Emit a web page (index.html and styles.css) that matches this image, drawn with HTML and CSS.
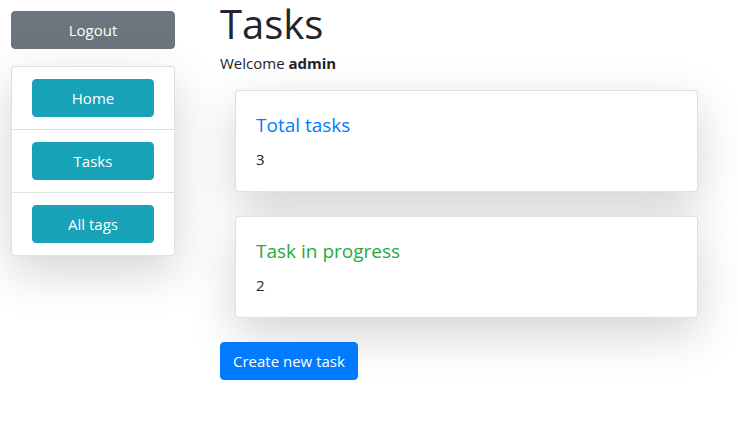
FILE: index.html
```html
<!DOCTYPE html>
<html>
<head>
<meta charset="utf-8">
<link rel="stylesheet" href="styles.css">
</head>
<body>
<div class="layout">
  <aside class="sidebar">
    <button class="btn btn-secondary btn-block">Logout</button>
    <ul class="list-group shadow">
      <li class="list-group-item"><button class="btn btn-info btn-block">Home</button></li>
      <li class="list-group-item"><button class="btn btn-info btn-block">Tasks</button></li>
      <li class="list-group-item"><button class="btn btn-info btn-block">All tags</button></li>
    </ul>
  </aside>
  <main class="main">
    <h1 class="title">Tasks</h1>
    <p class="welcome">Welcome <b>admin</b></p>
    <div class="cards">
      <div class="card shadow">
        <h5 class="card-title text-primary">Total tasks</h5>
        <p class="card-text">3</p>
      </div>
      <div class="card shadow">
        <h5 class="card-title text-success">Task in progress</h5>
        <p class="card-text">2</p>
      </div>
    </div>
    <button class="btn btn-primary">Create new task</button>
  </main>
</div>
</body>
</html>
```
FILE: styles.css
```css
* { box-sizing: border-box; }
html, body { margin: 0; padding: 0; }
body {
  font-family: "Segoe UI", "Open Sans", "Noto Sans", sans-serif;
  font-size: 16px;
  line-height: 1.5;
  color: #212529;
  background: #fff;
}
.layout {
  display: flex;
  align-items: flex-start;
}
.sidebar {
  width: 164px;
  margin: 11px 45px 0 11px;
  display: flex;
  flex-direction: column;
  gap: 17px;
}
.btn {
  display: inline-block;
  font-family: inherit;
  font-size: 15px;
  line-height: 24px;
  padding: 6px 12px;
  border: 1px solid transparent;
  border-radius: 4px;
  color: #fff;
  cursor: pointer;
  text-align: center;
}
.btn-block { display: block; width: 100%; }
.btn-secondary { background: #6c757d; border-color: #6c757d; }
.btn-info { background: #17a2b8; border-color: #17a2b8; }
.btn-primary { background: #007bff; border-color: #007bff; }
.shadow { box-shadow: 0 16px 48px rgba(0, 0, 0, 0.175); }
.list-group {
  list-style: none;
  margin: 0;
  padding: 0;
  border: 1px solid rgba(0, 0, 0, 0.125);
  border-radius: 4px;
  background: #fff;
}
.list-group-item {
  padding: 12px 20px;
  border-bottom: 1px solid rgba(0, 0, 0, 0.125);
}
.list-group-item:last-child { border-bottom: 0; }
.main {
  width: 493px;
}
.title {
  font-size: 40px;
  font-weight: 400;
  line-height: 48px;
  margin: 0 0 3px;
}
.welcome {
  margin: 0 0 15px;
  font-size: 15px;
  line-height: 24px;
}
.cards {
  padding: 0 15px;
  display: flex;
  flex-direction: column;
  gap: 24px;
  margin-bottom: 24px;
}
.card {
  border: 1px solid rgba(0, 0, 0, 0.125);
  border-radius: 4px;
  background: #fff;
  padding: 22px 20px 20px;
  height: 102px;
}
.card-title {
  margin: 0 0 10px;
  font-size: 19px;
  font-weight: 400;
  line-height: 24px;
}
.card-text {
  margin: 0;
  font-size: 15px;
  line-height: 24px;
}
.text-primary { color: #007bff; }
.text-success { color: #28a745; }
```
